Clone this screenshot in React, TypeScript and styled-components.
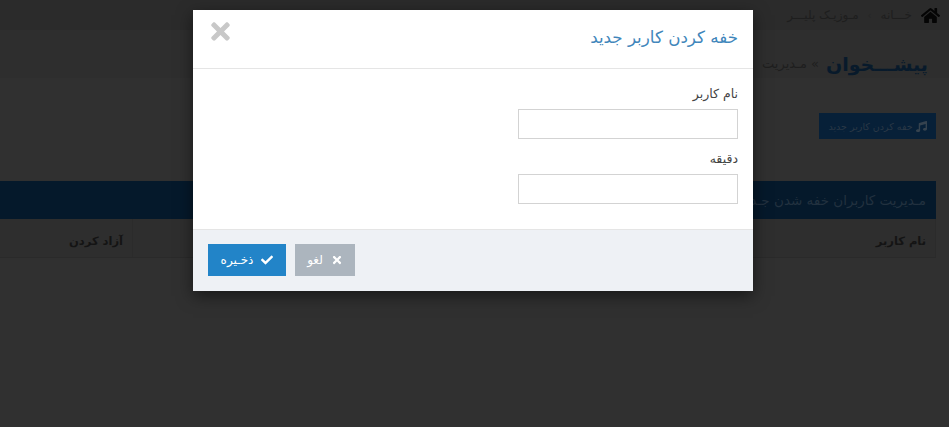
import React from "react";
import styled, { createGlobalStyle } from "styled-components";
import { FaHome, FaMusic, FaCheck, FaTimes } from "react-icons/fa";

const Global = createGlobalStyle`
  html, body { margin: 0; padding: 0; height: 100%; background: #303030; }
  body { font-family: "DejaVu Sans", "Liberation Sans", sans-serif; overflow: hidden; }
  #root { height: 100%; }
`;

const Page = styled.div`
  position: relative;
  width: 949px;
  height: 427px;
  overflow: hidden;
  background: #303030;
  direction: rtl;
`;
const Crumbs = styled.div`
  height: 30px;
  padding: 0 9px 0 0;
  box-sizing: border-box;
  background: #2b2b2b;
  display: flex;
  align-items: center;
  gap: 9px;
  color: #1e1e1e;
  font-size: 12px;
`;
const Sep = styled.span`
  color: #262626;
  font-size: 10px;
`;
const TitleRow = styled.div`
  display: flex;
  align-items: center;
  gap: 7px;
  padding: 19px 21px 0 0;
  height: 48px;
  box-sizing: border-box;
  background: #2e2e2e;
`;
const PageTitle = styled.h1`
  margin: 0;
  font-size: 19px;
  line-height: 30px;
  font-weight: 700;
  color: #081a2b;
`;
const SubTitle = styled.span`
  font-size: 13px;
  color: #1e1e1e;
  white-space: nowrap;
`;
const Actions = styled.div`
  padding: 35px 13px 0 0;
  height: 103px;
  box-sizing: border-box;
`;
const AddButton = styled.div`
  width: 117px;
  height: 26px;
  background: #072038;
  color: #2a3846;
  display: flex;
  align-items: center;
  justify-content: center;
  gap: 3px;
  font-size: 9.5px;
  white-space: nowrap;
  overflow: hidden;
`;
const Panel = styled.div`
  margin-right: 13px;
`;
const PanelHead = styled.div`
  height: 38px;
  background: #05192b;
  color: #22313f;
  font-size: 13.5px;
  line-height: 38px;
  padding-right: 10px;
  white-space: nowrap;
  overflow: hidden;
`;
const TableHead = styled.div`
  height: 39px;
  display: flex;
  justify-content: space-between;
  background: #2e2e2e;
  border-bottom: 1px solid #2a2a2a;
  box-sizing: border-box;
`;
const HeadCell = styled.div<{ $w: number; $pad: number }>`
  width: ${(p) => p.$w}px;
  box-sizing: border-box;
  padding: 0 ${(p) => p.$pad}px;
  font-size: 11.5px;
  font-weight: 700;
  line-height: 44px;
  color: #141414;
  border-right: 1px solid #2b2b2b;
`;

const Modal = styled.div`
  position: absolute;
  left: 193px;
  top: 10px;
  width: 560px;
  height: 281px;
  background: #fff;
  box-shadow: 0 5px 15px rgba(0, 0, 0, 0.5);
  display: flex;
  flex-direction: column;
`;
const ModalHeader = styled.div`
  height: 59px;
  box-sizing: border-box;
  border-bottom: 1px solid #e5e5e5;
  display: flex;
  justify-content: space-between;
  padding: 14px 15px 0 14px;
`;
const ModalTitle = styled.h4`
  margin: 0;
  font-size: 16.7px;
  line-height: 26px;
  font-weight: 400;
  color: #3f86bb;
`;
const Close = styled.span`
  color: #c8c8c8;
  font-size: 27px;
  line-height: 0;
  display: block;
  margin-top: -6px;
`;
const ModalBody = styled.div`
  height: 160px;
  box-sizing: border-box;
  padding: 15px 15px 0;
  display: flex;
  flex-direction: column;
`;
const Label = styled.label`
  font-size: 12.5px;
  line-height: 20px;
  color: #444;
  margin-bottom: 5px;
`;
const Input = styled.input`
  width: 220px;
  height: 30px;
  box-sizing: border-box;
  border: 1px solid #d3d3d3;
  background: #fff;
  margin-bottom: 10px;
  padding: 0;
  outline: none;
`;
const ModalFooter = styled.div`
  flex: 1;
  background: #eef1f5;
  border-top: 1px solid #e5e5e5;
  display: flex;
  flex-direction: row-reverse;
  justify-content: flex-end;
  direction: ltr;
  gap: 9px;
  padding: 14px 0 0 15px;
  box-sizing: border-box;
`;
const Button = styled.button<{ $bg: string; $w: number }>`
  width: ${(p) => p.$w}px;
  height: 32px;
  border: 0;
  padding: 0;
  background: ${(p) => p.$bg};
  color: #fff;
  font: 12px "DejaVu Sans", sans-serif;
  display: flex;
  align-items: center;
  justify-content: center;
  gap: 8px;
  direction: rtl;
`;

export default function App() {
  return (
    <Page>
      <Global />
      <Crumbs>
        <FaHome size={19} color="#050505" />
        <span>خـــانه</span>
        <Sep>›</Sep>
        <span>مـوزیـک پلیـــر</span>
      </Crumbs>
      <TitleRow>
        <PageTitle>پیشـــخوان</PageTitle>
        <SubTitle>» مـدیریت</SubTitle>
      </TitleRow>
      <Actions>
        <AddButton>
          <FaMusic size={11} color="#35424e" />
          <span>خفه کردن کاربر جدید</span>
        </AddButton>
      </Actions>
      <Panel>
        <PanelHead>مـدیریت کاربران خفه شدن جـدید</PanelHead>
        <TableHead>
          <HeadCell $w={200} $pad={9}>نام کاربر</HeadCell>
          <HeadCell $w={133} $pad={9}>آزاد کردن</HeadCell>
        </TableHead>
      </Panel>
      <Modal>
        <ModalHeader>
          <ModalTitle>خفه کردن کاربر جدید</ModalTitle>
          <Close>
            <FaTimes />
          </Close>
        </ModalHeader>
        <ModalBody>
          <Label>نام کاربر</Label>
          <Input />
          <Label>دقیقه</Label>
          <Input />
        </ModalBody>
        <ModalFooter>
          <Button $bg="#acb5be" $w={60}>
            <FaTimes size={12} />
            <span>لغو</span>
          </Button>
          <Button $bg="#2284c8" $w={78}>
            <FaCheck size={12} />
            <span>ذخـیره</span>
          </Button>
        </ModalFooter>
      </Modal>
    </Page>
  );
}
